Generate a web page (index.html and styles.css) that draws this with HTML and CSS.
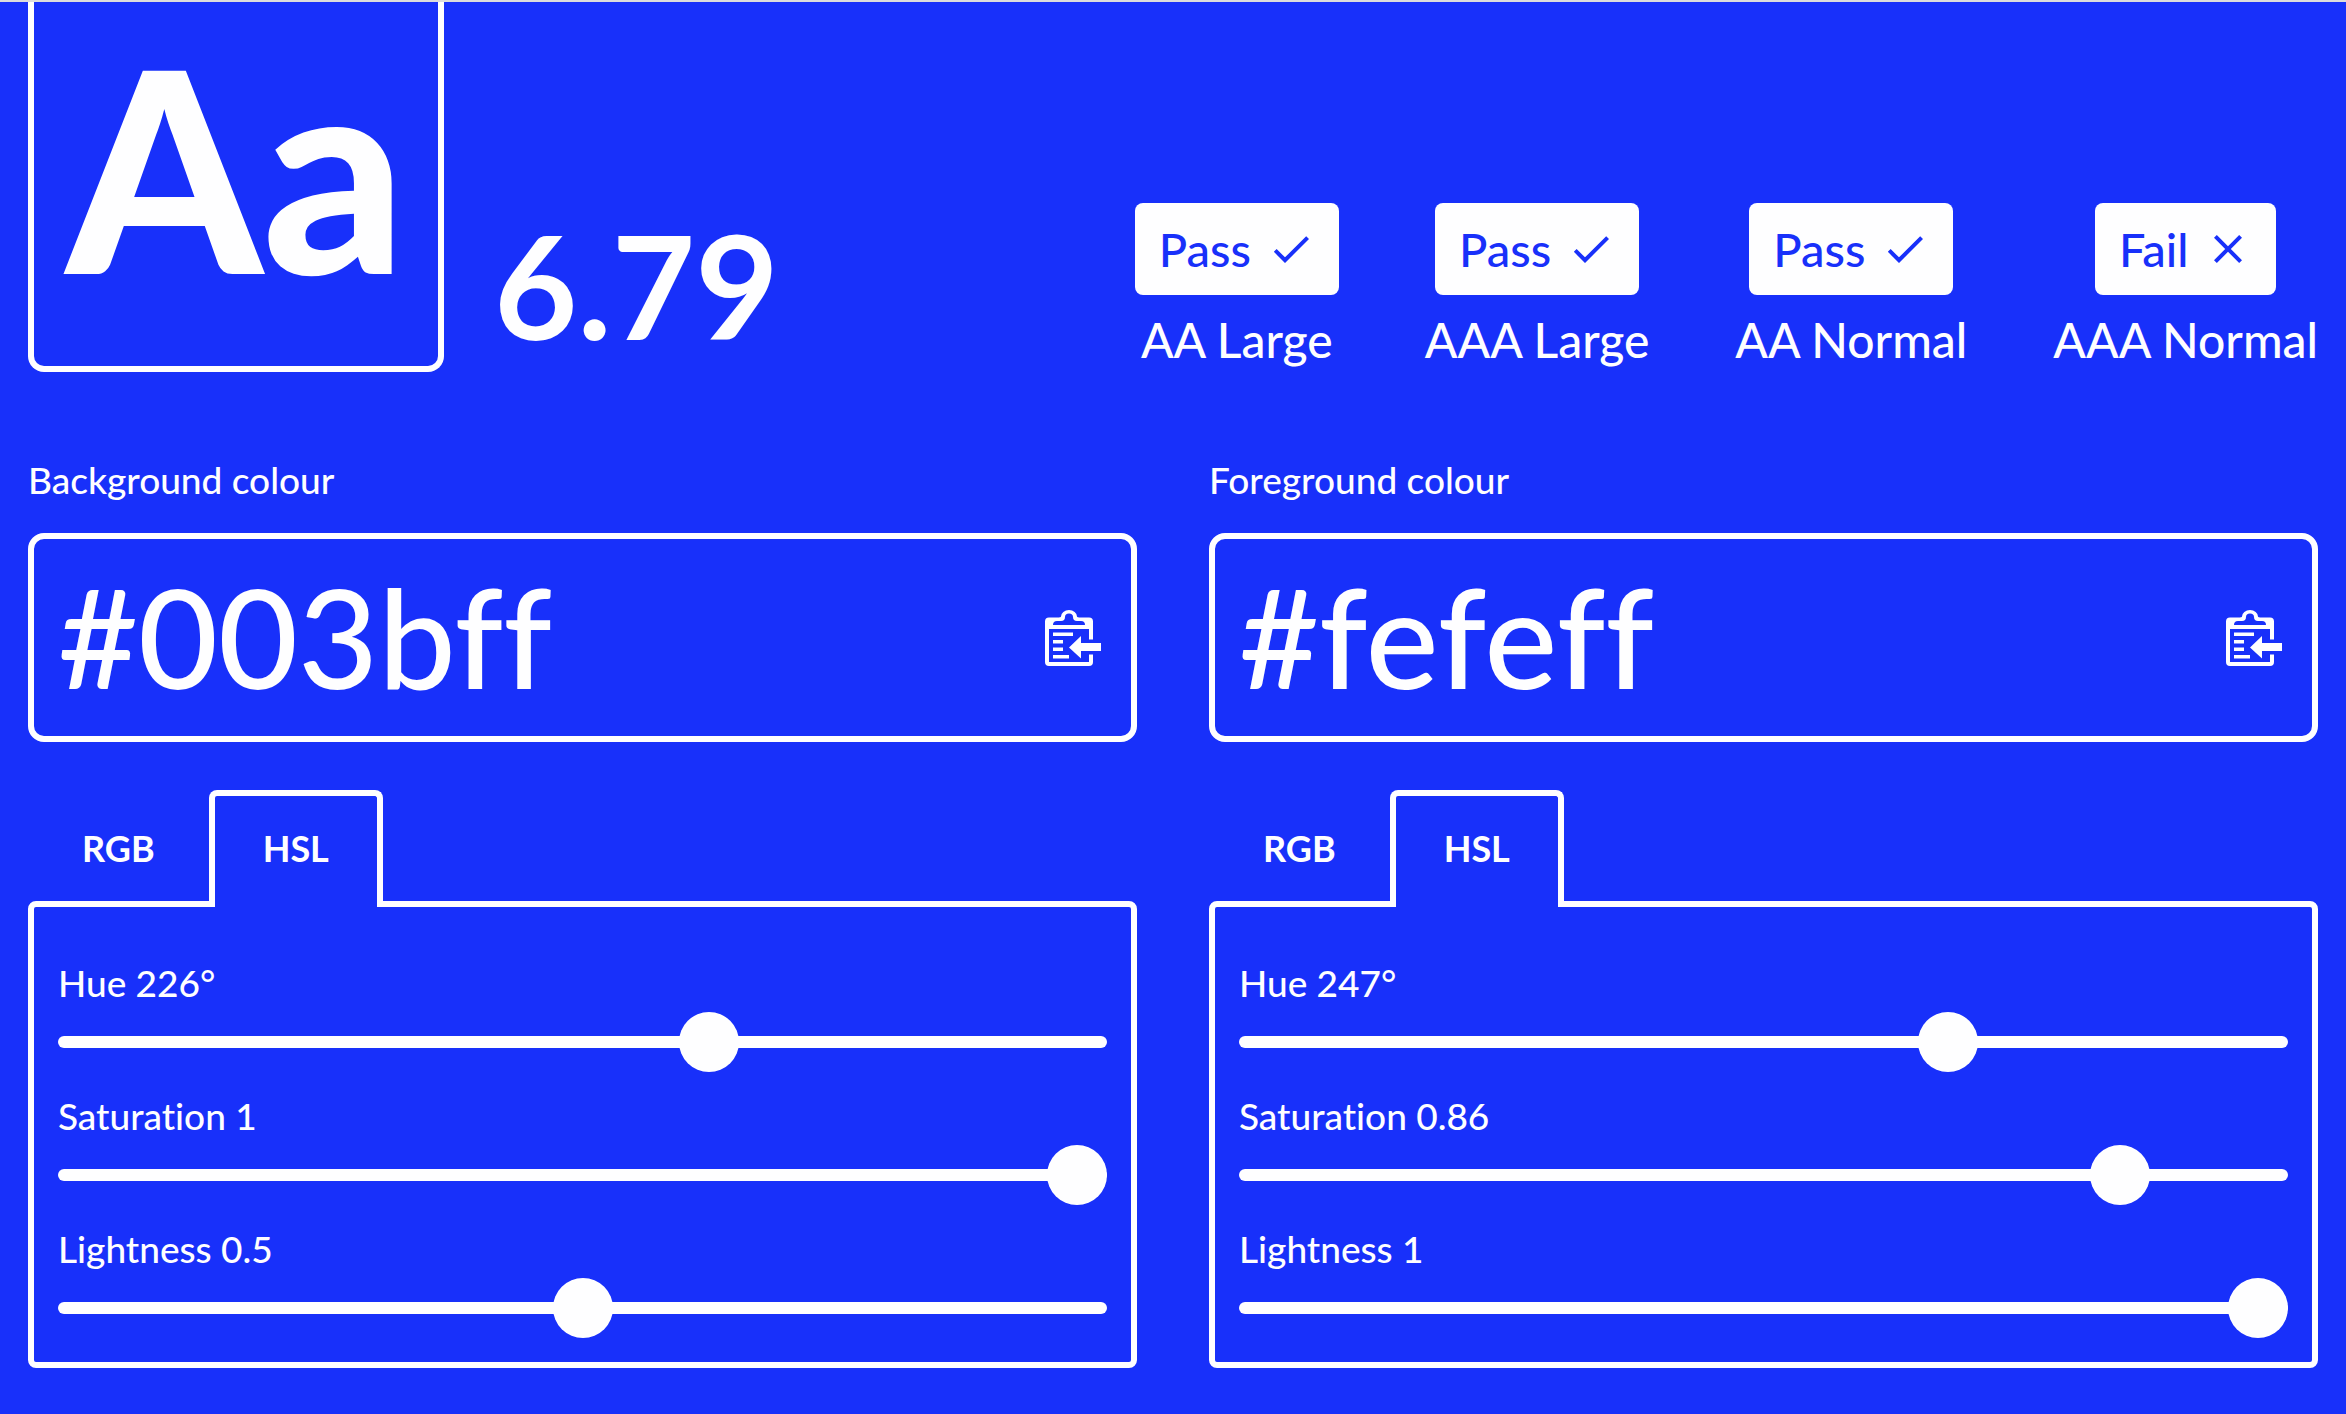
FILE: index.html
```html
<!DOCTYPE html>
<html lang="en">
  <head>
    <meta charset="utf-8">
    <meta name="viewport" content="width=device-width, initial-scale=1">
    <title>Colour contrast</title>
    <link rel="stylesheet" href="styles.css">
  </head>
  <body>
    <svg class="sprite" aria-hidden="true">
      <symbol id="icon-check" viewBox="0 0 24 24">
        <path d="M9 16.17 4.83 12l-1.42 1.41L9 19 21 7l-1.41-1.41z" />
      </symbol>
      <symbol id="icon-cross" viewBox="0 0 24 24">
        <path d="M19 6.41 17.59 5 12 10.59 6.41 5 5 6.41 10.59 12 5 17.59 6.41 19 12 13.41 17.59 19 19 17.59 13.41 12z" />
      </symbol>
      <symbol id="icon-paste" viewBox="0 0 56 56">
        <path fill-rule="evenodd" d="M4 7.5h8q4 0 4-1a8 6.5 0 0 1 16 0q0 1 4 1h8a4 4 0 0 1 4 4V29.500h-4V19H4v33h40v-7.500h4V52a4 4 0 0 1-4 4H4a4 4 0 0 1-4-4V11.500a4 4 0 0 1 4-4zM8 15h32q0-4-4-4h-4q-4 0-4-4a4 3.500 0 0 0-8 0q0 4-4 4h-4q-4 0-4 4z" />
        <path d="M8 22.500h20v3.500H8zM8 30h10v3.500H8zM8 37.500h10V41H8zM8 45h16v3.500H8zM24 37.500 36 26v7h20v8H36v7.500z" />
      </symbol>
    </svg>

    <header class="header">
      <div class="preview">Aa</div>
      <div class="ratio">6.79</div>
      <ul class="results">
        <li class="result">
          <span class="badge">Pass <svg class="badge-icon"><use href="#icon-check" /></svg></span>
          <span class="level">AA Large</span>
        </li>
        <li class="result">
          <span class="badge">Pass <svg class="badge-icon"><use href="#icon-check" /></svg></span>
          <span class="level">AAA Large</span>
        </li>
        <li class="result">
          <span class="badge">Pass <svg class="badge-icon"><use href="#icon-check" /></svg></span>
          <span class="level">AA Normal</span>
        </li>
        <li class="result">
          <span class="badge">Fail <svg class="badge-icon"><use href="#icon-cross" /></svg></span>
          <span class="level">AAA Normal</span>
        </li>
      </ul>
    </header>

    <main class="colours">
      <section class="colour">
        <label class="label" for="background">Background colour</label>
        <div class="field">
          <input class="field-input" id="background" type="text" value="#003bff" spellcheck="false">
          <button class="field-button" type="button" aria-label="Paste background colour">
            <svg class="field-icon"><use href="#icon-paste" /></svg>
          </button>
        </div>

        <div class="tabs" role="tablist">
          <button class="tab" type="button" role="tab" aria-selected="false">RGB</button>
          <button class="tab tab-active" type="button" role="tab" aria-selected="true">HSL</button>
        </div>
        <div class="panel" role="tabpanel">
          <div class="control">
            <label class="label" for="background-hue">Hue 226°</label>
            <input class="slider" id="background-hue" type="range" min="0" max="360" value="226">
          </div>
          <div class="control">
            <label class="label" for="background-saturation">Saturation 1</label>
            <input class="slider" id="background-saturation" type="range" min="0" max="1" step="0.01" value="1">
          </div>
          <div class="control">
            <label class="label" for="background-lightness">Lightness 0.5</label>
            <input class="slider" id="background-lightness" type="range" min="0" max="1" step="0.01" value="0.5">
          </div>
        </div>
      </section>

      <section class="colour">
        <label class="label" for="foreground">Foreground colour</label>
        <div class="field">
          <input class="field-input" id="foreground" type="text" value="#fefeff" spellcheck="false">
          <button class="field-button" type="button" aria-label="Paste foreground colour">
            <svg class="field-icon"><use href="#icon-paste" /></svg>
          </button>
        </div>

        <div class="tabs" role="tablist">
          <button class="tab" type="button" role="tab" aria-selected="false">RGB</button>
          <button class="tab tab-active" type="button" role="tab" aria-selected="true">HSL</button>
        </div>
        <div class="panel" role="tabpanel">
          <div class="control">
            <label class="label" for="foreground-hue">Hue 247°</label>
            <input class="slider" id="foreground-hue" type="range" min="0" max="360" value="247">
          </div>
          <div class="control">
            <label class="label" for="foreground-saturation">Saturation 0.86</label>
            <input class="slider" id="foreground-saturation" type="range" min="0" max="1" step="0.01" value="0.86">
          </div>
          <div class="control">
            <label class="label" for="foreground-lightness">Lightness 1</label>
            <input class="slider" id="foreground-lightness" type="range" min="0" max="1" step="0.01" value="1">
          </div>
        </div>
      </section>
    </main>
  </body>
</html>
```

FILE: styles.css
```css
:root {
  --background: #1830fa;
  --foreground: #fefeff;
}

* {
  box-sizing: border-box;
}

body {
  margin: 0;
  padding: 0 28px 46px;
  border-top: 2px solid #dcdcdc;
  background-color: var(--background);
  color: var(--foreground);
  font-family: "Lato", "Avenir Next", sans-serif;
  font-size: 37px;
  font-weight: 500;
  font-variant-ligatures: none;
  line-height: 48px;
}

input,
button {
  padding: 0;
  border: 0;
  background: none;
  color: inherit;
  font: inherit;
}

svg {
  display: block;
  fill: currentColor;
}

.sprite {
  display: none;
}

.header {
  display: flex;
  align-items: flex-end;
  margin-bottom: 84px;
}

.preview {
  padding: 0 32px 36px;
  border: 6px solid;
  border-top: 0;
  border-radius: 0 0 16px 16px;
  font-size: 280px;
  font-weight: 900;
  line-height: 328px;
}

.ratio {
  margin-left: 50px;
  font-size: 144px;
  font-weight: 700;
  line-height: 174px;
}

.results {
  display: flex;
  gap: 86px;
  margin: 0 0 0 auto;
  padding: 0;
  list-style: none;
  font-size: 48px;
}

.result {
  display: flex;
  flex-direction: column;
  align-items: center;
  gap: 12px;
}

.badge {
  display: flex;
  align-items: center;
  gap: 16px;
  padding: 16px 24px;
  border-radius: 8px;
  background-color: var(--foreground);
  color: var(--background);
  font-size: 47px;
  line-height: 60px;
}

.badge-icon {
  width: 48px;
  height: 48px;
}

.level {
  line-height: 65px;
}

.colours {
  display: grid;
  grid-template-columns: repeat(2, minmax(0, 1fr));
  gap: 72px;
}

.label {
  display: block;
}

.field {
  display: flex;
  align-items: center;
  margin: 29px 0 48px;
  padding: 0 24px;
  border: 6px solid;
  border-radius: 16px;
}

.field-input {
  flex: 1;
  min-width: 0;
  height: 197px;
  padding-bottom: 4px;
  outline: 0;
  font-size: 138px;
}

.field-button {
  padding: 6px;
  cursor: pointer;
}

.field-icon {
  width: 56px;
  height: 56px;
}

.tabs {
  display: flex;
}

.tab {
  padding: 28px 48px 35px;
  border: 6px solid transparent;
  border-bottom: 0;
  border-radius: 8px 8px 0 0;
  font-size: 36px;
  font-weight: 700;
  cursor: pointer;
}

/* covers the panel's top border so the tab opens into it */
.tab-active {
  z-index: 1;
  border-color: currentColor;
  background-color: var(--background);
}

.panel {
  display: flex;
  flex-direction: column;
  gap: 20px;
  margin-top: -6px;
  padding: 52px 24px 24px;
  border: 6px solid;
  border-radius: 8px;
}

.control {
  display: flex;
  flex-direction: column;
  gap: 5px;
}

.slider {
  width: 100%;
  height: 60px;
  margin: 0;
  appearance: none;
  cursor: pointer;
}

.slider::-webkit-slider-runnable-track {
  height: 12px;
  border-radius: 6px;
  background-color: var(--foreground);
}

.slider::-webkit-slider-thumb {
  width: 60px;
  height: 60px;
  margin-top: -24px;
  border-radius: 50%;
  background-color: var(--foreground);
  appearance: none;
}

@media (max-width: 1400px) {
  .header {
    flex-wrap: wrap;
    row-gap: 48px;
  }

  .results {
    flex-wrap: wrap;
    margin: 0;
  }

  .colours {
    grid-template-columns: minmax(0, 1fr);
  }
}
```
